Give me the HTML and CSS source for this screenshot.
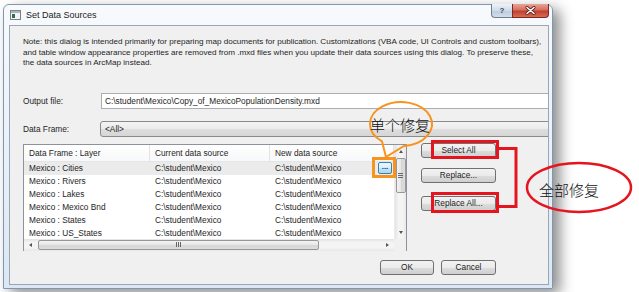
FILE: index.html
```html
<!DOCTYPE html>
<html lang="en">
<head>
  <meta charset="UTF-8" />
  <title>Set Data Sources</title>
  <link rel="stylesheet" href="styles.css">
</head>
<body>
  <div class="window">
    <div class="titlebar">
      <svg class="app-icon" width="11" height="10" viewBox="0 0 11 10">
        <rect x="0.5" y="0.5" width="10" height="9" fill="#f4f4f4" stroke="#7b7f86"/>
        <rect x="1" y="1" width="9" height="2" fill="#a9b4c2"/>
        <rect x="2" y="4" width="3" height="4" fill="#2f6d52"/>
      </svg>
      <span class="title">Set Data Sources</span>
      <div class="caption-btns">
        <span class="cap-help">?</span>
        <span class="cap-close">
          <svg width="11" height="9" viewBox="0 0 11 9">
            <path d="M2 1.5 L9 7.5 M9 1.5 L2 7.5" stroke="#5a1d18" stroke-width="3" stroke-linecap="round"/>
            <path d="M2 1.5 L9 7.5 M9 1.5 L2 7.5" stroke="#fff" stroke-width="1.6" stroke-linecap="round"/>
          </svg>
        </span>
      </div>
    </div>

    <div class="client">
      <p class="note">Note: this dialog is intended primarily for preparing map documents for publication. Customizations (VBA code, UI Controls and custom toolbars),<br>and table window appearance properties are removed from .mxd files when you update their data sources using this dialog. To preserve these,<br>the data sources in ArcMap instead.</p>

      <div class="field-row output-row">
        <label>Output file:</label>
        <div class="textbox">C:\student\Mexico\Copy_of_MexicoPopulationDensity.mxd</div>
      </div>

      <div class="field-row frame-row">
        <label>Data Frame:</label>
        <div class="combo">&lt;All&gt;</div>
      </div>

      <div class="main-row">
        <div class="listview">
          <div class="lv-content">
            <div class="lv-row lv-header">
              <span>Data Frame : Layer</span>
              <span>Current data source</span>
              <span>New data source</span>
            </div>
            <div class="lv-row selected">
              <span>Mexico : Cities</span>
              <span>C:\student\Mexico</span>
              <span class="new-src">C:\student\Mexico <b class="browse-btn">...</b></span>
            </div>
            <div class="lv-row">
              <span>Mexico : Rivers</span>
              <span>C:\student\Mexico</span>
              <span>C:\student\Mexico</span>
            </div>
            <div class="lv-row">
              <span>Mexico : Lakes</span>
              <span>C:\student\Mexico</span>
              <span>C:\student\Mexico</span>
            </div>
            <div class="lv-row">
              <span>Mexico : Mexico Bnd</span>
              <span>C:\student\Mexico</span>
              <span>C:\student\Mexico</span>
            </div>
            <div class="lv-row">
              <span>Mexico : States</span>
              <span>C:\student\Mexico</span>
              <span>C:\student\Mexico</span>
            </div>
            <div class="lv-row">
              <span>Mexico : US_States</span>
              <span>C:\student\Mexico</span>
              <span>C:\student\Mexico</span>
            </div>
          </div>
          <div class="vscroll">
            <span class="arrow up"></span>
            <span class="thumb-v"><i class="grip-v"></i></span>
            <span class="arrow down"></span>
          </div>
          <div class="hscroll">
            <span class="arrow left"></span>
            <span class="thumb-h"><i class="grip-h"></i></span>
            <span class="arrow right"></span>
          </div>
          <div class="corner"></div>
        </div>

        <div class="side-btns">
          <button class="btn select-all">Select All</button>
          <button class="btn replace">Replace...</button>
          <button class="btn replace-all">Replace All...</button>
        </div>
      </div>

      <div class="footer">
        <button class="btn ok">OK</button>
        <button class="btn cancel">Cancel</button>
      </div>
    </div>
  </div>

  <!-- hand-drawn notes on top of the screenshot -->
  <svg class="notes" width="639" height="292" viewBox="0 0 639 292">
    <path d="M382 141.4 L386 157 L404 145.9 A31 22 0 1 0 382 141.4 Z" fill="none" stroke="#f7931e" stroke-width="2"/>
    <text x="370" y="131" class="note-text">单个修复</text>
    <rect x="373.5" y="158.5" width="21" height="18" fill="none" stroke="#f7931e" stroke-width="3"/>

    <rect x="432.5" y="141.5" width="65" height="16" fill="none" stroke="#e4151f" stroke-width="3"/>
    <rect x="432.5" y="193.5" width="65" height="18" fill="none" stroke="#e4151f" stroke-width="3"/>
    <path d="M499 148.5 L516 148.5 L516 206.5 L499 206.5" fill="none" stroke="#e4151f" stroke-width="3"/>
    <ellipse cx="579" cy="187.5" rx="52" ry="24.5" fill="none" stroke="#e4151f" stroke-width="2.5"/>
    <text x="539" y="196" class="note-text">全部修复</text>
  </svg>
</body>
</html>
```

FILE: styles.css
```css
body {
  margin: 0;
  width: 639px;
  height: 292px;
  overflow: hidden;
  position: relative;
  background: #fff;
  font-family: 'Liberation Sans', Arial, sans-serif;
  font-size: 8.3px;
  color: #1e1e1e;
}

.window {
  margin: 4px 0 0 3px;
  width: 550px;
  height: 285px;
  box-sizing: border-box;
  border: 1px solid #7f97b3;
  border-radius: 6px 6px 0 0;
  background: linear-gradient(#f8fafd, #dce7f3);
  box-shadow: 7px 5px 14px rgba(0, 0, 0, 0.45);
  display: flex;
  flex-direction: column;
}

.titlebar {
  height: 20px;
  display: flex;
  align-items: center;
  padding-left: 6px;
}

.title {
  margin-left: 5px;
  font-size: 9px;
  color: #1b1b1b;
}

.caption-btns {
  margin-left: auto;
  margin-right: 3px;
  align-self: flex-start;
  margin-top: -1px;
  display: flex;
  height: 14px;
}

.cap-help, .cap-close {
  display: flex;
  align-items: center;
  justify-content: center;
  box-sizing: border-box;
  border: 1px solid #6d7f94;
  border-top: none;
}

.cap-help {
  width: 21px;
  border-radius: 0 0 0 4px;
  border-right: none;
  background: linear-gradient(#eef3f9, #cfdbe8 50%, #bccbdc 51%, #d2dde9);
  font-weight: bold;
  font-size: 8px;
  color: #3a4656;
}

.cap-close {
  width: 37px;
  border-radius: 0 0 4px 0;
  border-color: #7a2a22;
  background: linear-gradient(#e8a597, #d5705f 45%, #c2402f 55%, #d76a52);
}

.client {
  flex: 1;
  margin: 0 3px 3px 5px;
  border: 1px solid #97a6b8;
  background: #f0f0f0;
  overflow: hidden;
  padding: 11px 0 0 13px;
}

.note {
  margin: 0;
  font-size: 8.1px;
  line-height: 10.5px;
  white-space: nowrap;
}

.field-row {
  display: flex;
  align-items: center;
  height: 16px;
}

.output-row {
  margin-top: 24px;
}

.frame-row {
  margin-top: 12px;
}

.field-row label {
  width: 78px;
  flex-shrink: 0;
}

.textbox {
  flex-shrink: 0;
  width: 470px;
  height: 16px;
  box-sizing: border-box;
  border: 1px solid #abadb3;
  background: #fff;
  padding-left: 3px;
  line-height: 14px;
}

.combo {
  flex-shrink: 0;
  width: 470px;
  height: 16px;
  margin-left: -1px;
  box-sizing: border-box;
  border: 1px solid #8a8a8a;
  border-radius: 3px;
  background: linear-gradient(#f4f4f4, #ebebeb 50%, #dedede 51%, #d6d6d6);
  padding-left: 4px;
  line-height: 14px;
}

.main-row {
  margin-top: 7px;
  display: flex;
  gap: 14px;
}

.listview {
  width: 384px;
  height: 107px;
  box-sizing: border-box;
  border: 1px solid #8e939b;
  background: #fff;
  display: grid;
  grid-template-columns: 370px 12px;
  grid-template-rows: 94px 12px;
}

.lv-content {
  overflow: hidden;
}

.lv-row {
  display: grid;
  grid-template-columns: 126px 120px 1fr;
  height: 13px;
  line-height: 13px;
  white-space: nowrap;
}

.lv-row span {
  padding-left: 5px;
  overflow: hidden;
}

.lv-header {
  height: 17px;
  line-height: 16px;
  background: linear-gradient(#fff, #f7f8fa);
  border-bottom: 1px solid #e3e5e8;
  box-sizing: border-box;
}

.lv-header span {
  border-right: 1px solid #e2e3e6;
}

.lv-row.selected {
  background: #ebebeb;
}

.new-src {
  display: flex;
  align-items: center;
  justify-content: space-between;
  padding-right: 2px;
}

.browse-btn {
  width: 14px;
  height: 12px;
  box-sizing: border-box;
  border: 1px solid #3c7fb1;
  border-radius: 2px;
  background: linear-gradient(#eaf6fd, #d9f0fc 50%, #bee6fd 51%, #a7d9f5);
  font-weight: bold;
  font-size: 8px;
  line-height: 8px;
  text-align: center;
  color: #1c3550;
}

.vscroll, .hscroll {
  display: flex;
  align-items: center;
  background: linear-gradient(90deg, #e3e3e3, #f4f4f4 30%, #f4f4f4 70%, #e8e8e8);
}

.vscroll {
  flex-direction: column;
  border-left: 1px solid #ececec;
}

.hscroll {
  background: linear-gradient(#e3e3e3, #f4f4f4 30%, #f4f4f4 70%, #e8e8e8);
}

.corner {
  background: #f0f0f0;
}

.arrow {
  width: 0;
  height: 0;
  flex-shrink: 0;
  border: 2.5px solid transparent;
}

.arrow.up {
  border-bottom: 3px solid #555;
  margin: 3px 0 5px;
}

.arrow.down {
  border-top: 3px solid #555;
  margin-top: auto;
  margin-bottom: 3px;
}

.arrow.left {
  border-right: 3px solid #555;
  margin: 0 6px 0 3px;
}

.arrow.right {
  border-left: 3px solid #555;
  margin-left: auto;
  margin-right: 3px;
}

.thumb-v, .thumb-h {
  display: flex;
  align-items: center;
  justify-content: center;
  box-sizing: border-box;
  border: 1px solid #979797;
  border-radius: 2px;
}

.thumb-v {
  width: 10px;
  height: 35px;
  background: linear-gradient(90deg, #f3f3f3, #e6e6e6 50%, #d6d6d6 51%, #dcdcdc);
}

.thumb-h {
  width: 281px;
  height: 10px;
  background: linear-gradient(#f3f3f3, #e6e6e6 50%, #d6d6d6 51%, #dcdcdc);
}

.grip-v {
  width: 5px;
  height: 5px;
  background: repeating-linear-gradient(#666 0 1px, transparent 1px 2px);
}

.grip-h {
  width: 5px;
  height: 5px;
  background: repeating-linear-gradient(90deg, #666 0 1px, transparent 1px 2px);
}

.side-btns {
  width: 75px;
  display: flex;
  flex-direction: column;
  margin-top: -1px;
}

.btn {
  height: 15px;
  padding: 0;
  box-sizing: border-box;
  border: 1px solid #707070;
  border-radius: 3px;
  background: linear-gradient(#f2f2f2, #ebebeb 50%, #dddddd 51%, #cfcfcf);
  font-family: inherit;
  font-size: 8.3px;
  color: #1e1e1e;
  line-height: 13px;
}

.replace {
  margin-top: 10px;
}

.replace-all {
  margin-top: 13px;
}

.footer {
  width: 473px;
  margin-top: 9px;
  display: flex;
  justify-content: flex-end;
  gap: 7px;
}

.ok {
  width: 54px;
}

.cancel {
  width: 55px;
}

.notes {
  position: absolute;
  left: 0;
  top: 0;
  pointer-events: none;
}

.note-text {
  font-family: 'Noto Sans CJK SC', sans-serif;
  font-size: 15px;
  font-weight: 300;
  fill: #111;
}
```
